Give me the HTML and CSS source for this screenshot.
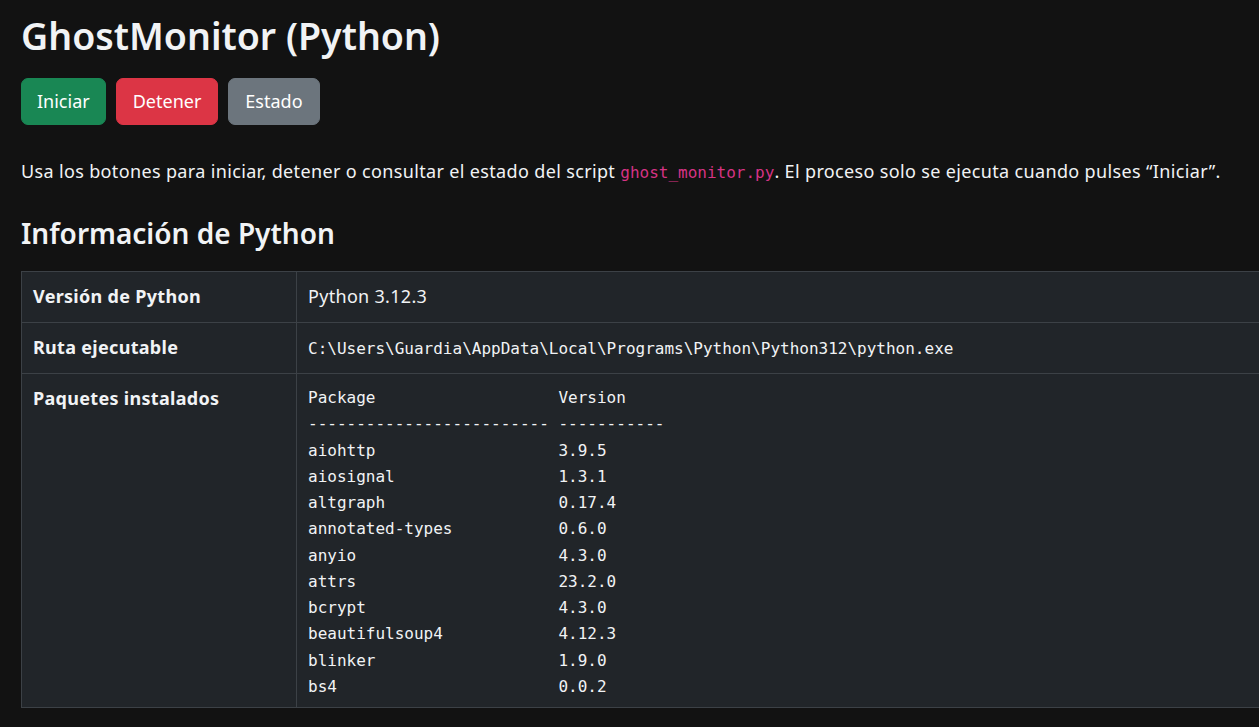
FILE: index.html
```html
<!DOCTYPE html>
<html lang="es">
<head>
<meta charset="utf-8">
<title>GhostMonitor (Python)</title>
<link rel="stylesheet" href="styles.css">
</head>
<body>
<div class="page">
  <h1 class="title">GhostMonitor (Python)</h1>
  <div class="actions">
    <button class="btn btn-success">Iniciar</button>
    <button class="btn btn-danger">Detener</button>
    <button class="btn btn-secondary">Estado</button>
  </div>
  <p class="intro">Usa los botones para iniciar, detener o consultar el estado del script <code>ghost_monitor.py</code>. El proceso solo se ejecuta cuando pulses “Iniciar”.</p>
  <h2 class="section-title">Información de Python</h2>
  <table class="info">
    <tbody>
      <tr>
        <th>Versión de Python</th>
        <td>Python 3.12.3</td>
      </tr>
      <tr>
        <th>Ruta ejecutable</th>
        <td><span class="mono">C:\Users\Guardia\AppData\Local\Programs\Python\Python312\python.exe</span></td>
      </tr>
      <tr>
        <th>Paquetes instalados</th>
        <td class="pkg-cell"><pre class="pkgs">Package                   Version
------------------------- -----------
aiohttp                   3.9.5
aiosignal                 1.3.1
altgraph                  0.17.4
annotated-types           0.6.0
anyio                     4.3.0
attrs                     23.2.0
bcrypt                    4.3.0
beautifulsoup4            4.12.3
blinker                   1.9.0
bs4                       0.0.2</pre></td>
      </tr>
    </tbody>
  </table>
</div>
</body>
</html>
```

FILE: styles.css
```css
html {
  overflow: hidden;
}
body {
  margin: 0;
  background: #121212;
  color: #f1f3f5;
  font-family: "Noto Sans", "Open Sans", sans-serif;
  font-size: 18px;
  line-height: 1.5;
}
.page {
  padding: 13px 0 0 21px;
}
.title {
  margin: 0 0 20px;
  font-size: 37.5px;
  font-weight: 600;
  line-height: 1.2;
}
.actions {
  display: flex;
  gap: 10px;
}
.btn {
  font-family: inherit;
  font-size: 18px;
  line-height: 27px;
  padding: 9px 15px;
  border: 1px solid transparent;
  border-radius: 7px;
  color: #fff;
}
.btn-success { background: #198754; border-color: #198754; }
.btn-danger { background: #dc3545; border-color: #dc3545; padding: 9px 16px; }
.btn-secondary { background: #6c757d; border-color: #6c757d; padding: 9px 16px; }
.intro {
  margin: 33px 0 0;
  letter-spacing: 0.35px;
}
code {
  font-family: "DejaVu Sans Mono", monospace;
  font-size: 16px;
  letter-spacing: 0;
  color: #d63384;
}
.section-title {
  margin: 31px 0 20px;
  font-size: 28px;
  font-weight: 600;
  line-height: 35px;
}
.info {
  width: calc(100% + 40px);
  border-collapse: collapse;
  background: #212529;
}
.info th,
.info td {
  border: 1px solid #3c4146;
  padding: 11px 11px 12px;
  text-align: left;
  vertical-align: top;
}
.info th {
  width: 252px;
  font-weight: 700;
  letter-spacing: 0.3px;
}
.info td {
  letter-spacing: 0.3px;
}
.mono {
  font-family: "DejaVu Sans Mono", monospace;
  font-size: 16px;
  letter-spacing: 0;
}
.info td.pkg-cell {
  padding-top: 11px;
  padding-bottom: 7px;
}
.pkgs {
  margin: 0;
  font-family: "DejaVu Sans Mono", monospace;
  font-size: 16px;
  line-height: 26.27px;
  letter-spacing: 0;
  color: #f1f3f5;
}
```
